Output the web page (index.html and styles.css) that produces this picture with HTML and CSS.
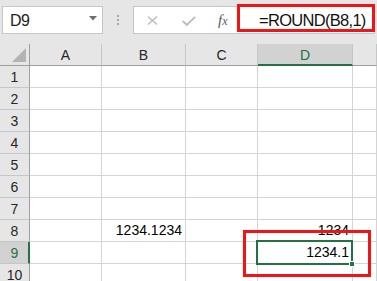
FILE: index.html
```html
<!DOCTYPE html>
<html lang="en">
<head>
    <meta charset="UTF-8">
    <meta name="viewport" content="width=device-width, initial-scale=1.0">
    <title>ROUND</title>
    <link rel="stylesheet" href="styles.css">
</head>
<body>

<div class="toolbar">
    <div class="name-box">
        <span>D9</span>
        <svg class="drop" width="8" height="5" viewBox="0 0 8 5"><path d="M0 0H8L4 4.5Z" fill="#6d6d6d"/></svg>
    </div>
    <div class="grip"><i></i><i></i><i></i></div>
    <div class="formula-bar">
        <div class="fx-buttons">
            <svg width="11" height="9" viewBox="0 0 11 9"><path d="M1 0.5L10 8.5M10 0.5L1 8.5" stroke="#bcbcbc" stroke-width="1.4" fill="none"/></svg>
            <svg width="14" height="10" viewBox="0 0 14 10"><path d="M0.8 5L4.8 9L13.2 0.8" stroke="#bcbcbc" stroke-width="1.8" fill="none"/></svg>
            <span class="fx"><i>f</i><i>x</i></span>
        </div>
        <div class="formula-input">=ROUND(B8,1)</div>
    </div>
</div>

<div class="sheet">
    <div class="corner"><span class="tri"></span></div>
    <div class="col-head">A</div>
    <div class="col-head">B</div>
    <div class="col-head">C</div>
    <div class="col-head active">D</div>
    <div class="col-head"></div>

    <div class="row-head">1</div><div class="cell"></div><div class="cell"></div><div class="cell"></div><div class="cell"></div><div class="cell"></div>
    <div class="row-head">2</div><div class="cell"></div><div class="cell"></div><div class="cell"></div><div class="cell"></div><div class="cell"></div>
    <div class="row-head">3</div><div class="cell"></div><div class="cell"></div><div class="cell"></div><div class="cell"></div><div class="cell"></div>
    <div class="row-head">4</div><div class="cell"></div><div class="cell"></div><div class="cell"></div><div class="cell"></div><div class="cell"></div>
    <div class="row-head">5</div><div class="cell"></div><div class="cell"></div><div class="cell"></div><div class="cell"></div><div class="cell"></div>
    <div class="row-head">6</div><div class="cell"></div><div class="cell"></div><div class="cell"></div><div class="cell"></div><div class="cell"></div>
    <div class="row-head">7</div><div class="cell"></div><div class="cell"></div><div class="cell"></div><div class="cell"></div><div class="cell"></div>
    <div class="row-head">8</div><div class="cell"></div><div class="cell num">1234.1234</div><div class="cell"></div><div class="cell num">1234</div><div class="cell"></div>
    <div class="row-head active">9</div><div class="cell"></div><div class="cell"></div><div class="cell"></div><div class="cell num selected">1234.1<span class="handle"></span></div><div class="cell"></div>
    <div class="row-head">10</div><div class="cell"></div><div class="cell"></div><div class="cell"></div><div class="cell"></div><div class="cell"></div>
</div>

<!-- annotation frames -->
<div class="mark mark-formula"></div>
<div class="mark mark-cell"></div>

</body>
</html>
```

FILE: styles.css
```css
* {
    margin: 0;
    padding: 0;
    box-sizing: border-box;
}

html, body {
    overflow: hidden;
}

body {
    font-family: "Liberation Sans", Arial, sans-serif;
    background-color: #e6e6e6;
    color: #000;
    position: relative;
    height: 281px;
}

/* Barre du haut */
.toolbar {
    height: 44px;
    display: flex;
    align-items: flex-start;
    padding-top: 6px;
    padding-left: 2px;
}

.name-box {
    width: 101px;
    height: 28px;
    background-color: #fff;
    border: 1px solid #c6c6c6;
    display: flex;
    align-items: center;
    justify-content: space-between;
    padding: 0 5px 0 7px;
    font-size: 16px;
    letter-spacing: -0.5px;
    color: #222;
}

.name-box span {
    padding-top: 1px;
}

.name-box .drop {
    margin-top: -3px;
}

.grip {
    width: 30px;
    height: 28px;
    display: flex;
    flex-direction: column;
    align-items: center;
    justify-content: center;
    gap: 2px;
    padding-right: 1px;
}

.grip i {
    width: 2px;
    height: 2px;
    background-color: #a6a6a6;
}

.formula-bar {
    width: 242px;
    height: 28px;
    display: flex;
    background-color: #fff;
    border: 1px solid #c6c6c6;
}

.fx-buttons {
    width: 103px;
    display: flex;
    align-items: center;
    padding-left: 13px;
}

.fx-buttons svg:first-child {
    margin-right: 24px;
}

.fx-buttons svg:nth-child(2) {
    margin-right: 22px;
    margin-top: 1px;
}

.fx {
    font-family: "Liberation Serif", serif;
    font-style: italic;
    font-size: 15px;
    color: #5a5a5a;
}

.fx i:last-child {
    font-size: 12px;
}

.formula-input {
    flex: 1;
    font-size: 16.5px;
    letter-spacing: -0.7px;
    padding-left: 22px;
    line-height: 26px;
    color: #111;
}

/* Feuille */
.sheet {
    display: grid;
    grid-template-columns: 30px 72px 84px 72px 95px 1fr;
    grid-auto-rows: 22px;
    background-color: #fff;
    font-size: 14px;
}

.corner,
.col-head,
.row-head {
    background-color: #e6e6e6;
    color: #262626;
    font-size: 14px;
}

.corner {
    position: relative;
    border-right: 1px solid #9f9f9f;
    border-bottom: 1px solid #9f9f9f;
}

.corner .tri {
    position: absolute;
    right: 3px;
    bottom: 3px;
    width: 0;
    height: 0;
    border-left: 14px solid transparent;
    border-bottom: 14px solid #b4b4b4;
}

.col-head {
    display: flex;
    align-items: center;
    justify-content: center;
    border-right: 1px solid #c6c6c6;
    border-bottom: 1px solid #9f9f9f;
    padding-top: 1px;
}

.col-head.active {
    background-color: #d2d2d2;
    color: #217346;
    border-bottom: 2px solid #217346;
    padding-top: 2px;
}

.row-head {
    display: flex;
    align-items: center;
    justify-content: center;
    border-right: 1px solid #9f9f9f;
    border-bottom: 1px solid #c6c6c6;
    padding-top: 1px;
}

.row-head.active {
    background-color: #d2d2d2;
    color: #217346;
    border-right: 2px solid #217346;
    padding-left: 1px;
}

.cell {
    border-right: 1px solid #d4d4d4;
    border-bottom: 1px solid #d4d4d4;
    line-height: 21px;
    padding: 0 3px;
}

.cell.num {
    text-align: right;
}

.cell.selected {
    position: relative;
}

.cell.selected::before {
    content: "";
    position: absolute;
    top: -2px;
    left: -2px;
    right: -1px;
    bottom: -2px;
    border: 2px solid #217346;
}

.handle {
    position: absolute;
    right: -3px;
    bottom: -4px;
    width: 6px;
    height: 6px;
    background-color: #217346;
    border: 1px solid #fff;
}

/* Cadres rouges d'annotation */
.mark {
    position: absolute;
    border: 3px solid #f21414;
}

.mark-formula {
    left: 237px;
    top: 4px;
    width: 138px;
    height: 28px;
}

.mark-cell {
    left: 243px;
    top: 230px;
    width: 128px;
    height: 47px;
}
```
